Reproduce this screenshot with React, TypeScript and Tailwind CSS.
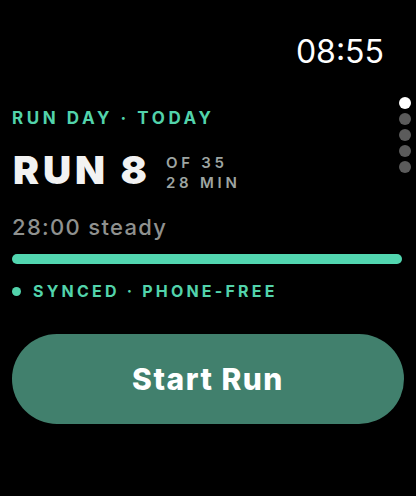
import React from "react";

export default function App() {
  const font = { fontFamily: "Inter, 'Noto Sans', sans-serif" };
  return (
    <div className="relative w-[416px] h-[496px] bg-black overflow-hidden" style={font}>
      <div className="flex flex-col px-3">
        <div className="flex justify-end pt-[36px] pr-[20px]">
          <span className="text-[32px] leading-none text-white font-normal">08:55</span>
        </div>
        <div className="mt-[42px] text-[17px] leading-none font-bold tracking-[0.21em] text-[#52d3ab]">
          RUN DAY · TODAY
        </div>
        <div className="mt-[23px] flex items-start">
          <span className="ml-[1px] text-[39px] leading-none font-black text-[#f2f2f2] tracking-[0.1em]">RUN 8</span>
          <div className="ml-[15px] mt-[5px] flex flex-col gap-[5px] text-[15px] leading-none font-semibold tracking-[0.25em] text-[#9ea5a2]">
            <span>OF 35</span>
            <span>28 MIN</span>
          </div>
        </div>
        <div className="mt-[26px] text-[22px] leading-none font-medium tracking-[0.06em] text-[#8f918f]">28:00 steady</div>
        <div className="mt-[16px] h-[10px] w-[390px] rounded-full bg-[#52d6b0]" />
        <div className="mt-[19px] flex items-center">
          <span className="w-[9px] h-[9px] rounded-full bg-[#52d3ab]" />
          <span className="ml-[12px] text-[16px] leading-none font-bold tracking-[0.2em] text-[#52d3ab]">
            SYNCED · PHONE-FREE
          </span>
        </div>
        <button className="mt-[35px] h-[90px] w-[392px] rounded-full bg-[#41806d] flex items-center justify-center">
          <span className="text-[30px] leading-none font-extrabold tracking-[0.05em] text-white">Start Run</span>
        </button>
      </div>
      <div className="absolute left-[399px] top-[97px] flex flex-col gap-[4px]">
        <span className="w-[12px] h-[12px] rounded-full bg-white" />
        <span className="w-[12px] h-[12px] rounded-full bg-[#5b5b5b]" />
        <span className="w-[12px] h-[12px] rounded-full bg-[#5b5b5b]" />
        <span className="w-[12px] h-[12px] rounded-full bg-[#5b5b5b]" />
        <span className="w-[12px] h-[12px] rounded-full bg-[#5b5b5b]" />
      </div>
    </div>
  );
}
